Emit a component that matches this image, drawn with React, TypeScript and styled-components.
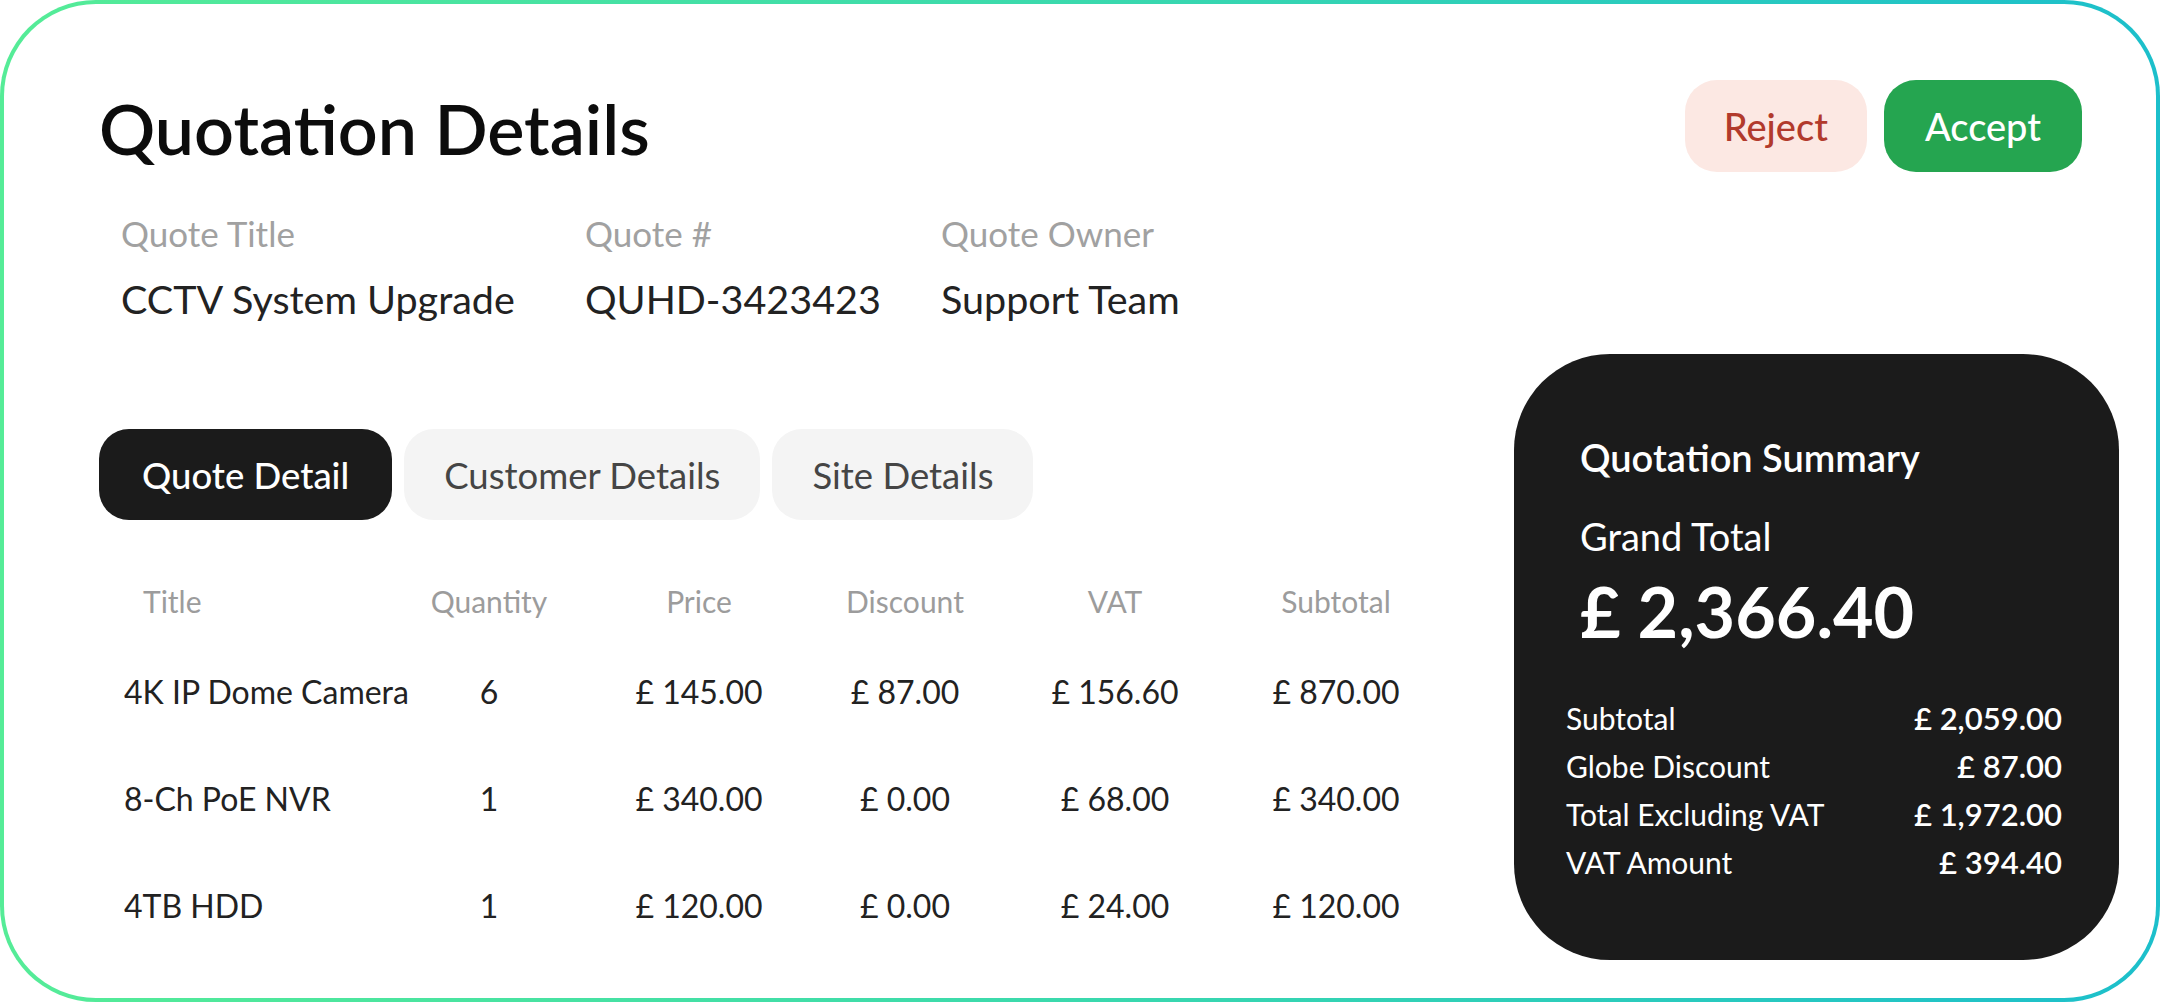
import React from 'react';
import styled, { createGlobalStyle } from 'styled-components';

const GlobalStyle = createGlobalStyle`
  html, body {
    margin: 0;
    padding: 0;
    background: #ffffff;
  }
  body {
    font-family: 'Lato', 'Liberation Sans', sans-serif;
    -webkit-font-smoothing: antialiased;
  }
  * {
    box-sizing: border-box;
  }
`;

const Card = styled.div`
  display: flex;
  flex-direction: column;
  width: 2160px;
  height: 1002px;
  padding: 76px 37px 38px 95px;
  border: 4px solid transparent;
  border-radius: 96px;
  background:
    linear-gradient(#ffffff, #ffffff) padding-box,
    linear-gradient(90deg, #55ec97 0%, #3ad9ad 50%, #1cbfcb 100%) border-box;
`;

const Header = styled.div`
  display: flex;
  align-items: center;
  justify-content: space-between;
  padding-right: 37px;
`;

const Title = styled.h1`
  margin: 4px 0 0;
  font-size: 70px;
  font-weight: 600;
  color: #0c0c0c;
  line-height: 1.2;
`;

const Actions = styled.div`
  display: flex;
  gap: 17px;
`;

const ActionButton = styled.button<{ $variant: 'reject' | 'accept' }>`
  height: 92px;
  padding: 0 ${p => (p.$variant === 'reject' ? '39px' : '41px')};
  border: none;
  border-radius: 32px;
  font-family: inherit;
  font-size: 38px;
  font-weight: 500;
  background: ${p => (p.$variant === 'reject' ? '#fce8e3' : '#25a550')};
  color: ${p => (p.$variant === 'reject' ? '#b23a2c' : '#ffffff')};
`;

const Main = styled.div`
  flex: 1;
  display: flex;
  align-items: flex-end;
  justify-content: space-between;
`;

const LeftColumn = styled.div`
  align-self: stretch;
  display: flex;
  flex-direction: column;
`;

const InfoGrid = styled.div`
  display: grid;
  grid-template-columns: 464px 356px auto;
  margin-top: 43px;
  padding-left: 22px;
`;

const InfoItem = styled.div`
  display: flex;
  flex-direction: column;
  gap: 26px;
`;

const InfoLabel = styled.span`
  font-size: 35px;
  line-height: 37px;
  color: #a1a1a1;
`;

const InfoValue = styled.span`
  font-size: 39.5px;
  line-height: 41px;
  color: #222222;
`;

const Tabs = styled.div`
  display: flex;
  gap: 12px;
  margin-top: 110px;
`;

const Tab = styled.button<{ $active?: boolean }>`
  height: 91px;
  padding: 0 ${p => (p.$active ? '43px' : '40px')};
  border: none;
  border-radius: 30px;
  font-family: inherit;
  font-size: 36.5px;
  font-weight: ${p => (p.$active ? 500 : 400)};
  background: ${p => (p.$active ? '#1b1b1b' : '#f4f4f4')};
  color: ${p => (p.$active ? '#ffffff' : '#454545')};
`;

const Table = styled.div`
  display: grid;
  grid-template-columns: 259px 212px 208px 204px 216px 226px;
  margin-top: 44px;
  margin-left: 25px;
`;

const HeadCell = styled.div<{ $first?: boolean }>`
  height: 74px;
  display: flex;
  align-items: center;
  justify-content: ${p => (p.$first ? 'flex-start' : 'center')};
  padding-left: ${p => (p.$first ? '19px' : '0')};
  font-size: 30px;
  color: #9c9c9c;
`;

const Cell = styled.div<{ $first?: boolean }>`
  height: 107px;
  display: flex;
  align-items: center;
  justify-content: ${p => (p.$first ? 'flex-start' : 'center')};
  font-size: 32px;
  color: #222222;
  white-space: nowrap;
`;

const Summary = styled.div`
  width: 605px;
  height: 606px;
  padding: 80px 57px 0 52px;
  border-radius: 96px;
  background: #1b1b1b;
  color: #ffffff;
  display: flex;
  flex-direction: column;
`;

const SummaryHeading = styled.div`
  padding-left: 14px;
  font-size: 38px;
  line-height: 46px;
  font-weight: 600;
`;

const GrandLabel = styled.div`
  margin-top: 36px;
  padding-left: 14px;
  font-size: 38px;
  line-height: 41px;
`;

const GrandAmount = styled.div`
  margin-top: 15px;
  padding-left: 14px;
  font-size: 70px;
  line-height: 79px;
  font-weight: 700;
`;

const SummaryRows = styled.div`
  margin-top: 43px;
  display: flex;
  flex-direction: column;
`;

const SummaryRow = styled.div`
  height: 48px;
  display: flex;
  align-items: center;
  justify-content: space-between;
  font-size: 30px;
`;

const SummaryValue = styled.span`
  font-weight: 600;
  font-size: 31px;
`;

const items = [
  { title: '4K IP Dome Camera', qty: '6', price: '£ 145.00', discount: '£ 87.00', vat: '£ 156.60', subtotal: '£ 870.00' },
  { title: '8-Ch PoE NVR', qty: '1', price: '£ 340.00', discount: '£ 0.00', vat: '£ 68.00', subtotal: '£ 340.00' },
  { title: '4TB HDD', qty: '1', price: '£ 120.00', discount: '£ 0.00', vat: '£ 24.00', subtotal: '£ 120.00' },
];

const totals = [
  { label: 'Subtotal', value: '£ 2,059.00' },
  { label: 'Globe Discount', value: '£ 87.00' },
  { label: 'Total Excluding VAT', value: '£ 1,972.00' },
  { label: 'VAT Amount', value: '£ 394.40' },
];

const columns = ['Title', 'Quantity', 'Price', 'Discount', 'VAT', 'Subtotal'];

const App = () => {
  return (
    <>
      <GlobalStyle />
      <Card>
        <Header>
          <Title>Quotation Details</Title>
          <Actions>
            <ActionButton $variant="reject">Reject</ActionButton>
            <ActionButton $variant="accept">Accept</ActionButton>
          </Actions>
        </Header>
        <Main>
          <LeftColumn>
            <InfoGrid>
              <InfoItem>
                <InfoLabel>Quote Title</InfoLabel>
                <InfoValue>CCTV System Upgrade</InfoValue>
              </InfoItem>
              <InfoItem>
                <InfoLabel>Quote #</InfoLabel>
                <InfoValue>QUHD-3423423</InfoValue>
              </InfoItem>
              <InfoItem>
                <InfoLabel>Quote Owner</InfoLabel>
                <InfoValue>Support Team</InfoValue>
              </InfoItem>
            </InfoGrid>
            <Tabs>
              <Tab $active>Quote Detail</Tab>
              <Tab>Customer Details</Tab>
              <Tab>Site Details</Tab>
            </Tabs>
            <Table>
              {columns.map((c, i) => (
                <HeadCell key={c} $first={i === 0}>{c}</HeadCell>
              ))}
              {items.map(item => (
                <React.Fragment key={item.title}>
                  <Cell $first>{item.title}</Cell>
                  <Cell>{item.qty}</Cell>
                  <Cell>{item.price}</Cell>
                  <Cell>{item.discount}</Cell>
                  <Cell>{item.vat}</Cell>
                  <Cell>{item.subtotal}</Cell>
                </React.Fragment>
              ))}
            </Table>
          </LeftColumn>
          <Summary>
            <SummaryHeading>Quotation Summary</SummaryHeading>
            <GrandLabel>Grand Total</GrandLabel>
            <GrandAmount>£ 2,366.40</GrandAmount>
            <SummaryRows>
              {totals.map(t => (
                <SummaryRow key={t.label}>
                  <span>{t.label}</span>
                  <SummaryValue>{t.value}</SummaryValue>
                </SummaryRow>
              ))}
            </SummaryRows>
          </Summary>
        </Main>
      </Card>
    </>
  );
};

export default App;
